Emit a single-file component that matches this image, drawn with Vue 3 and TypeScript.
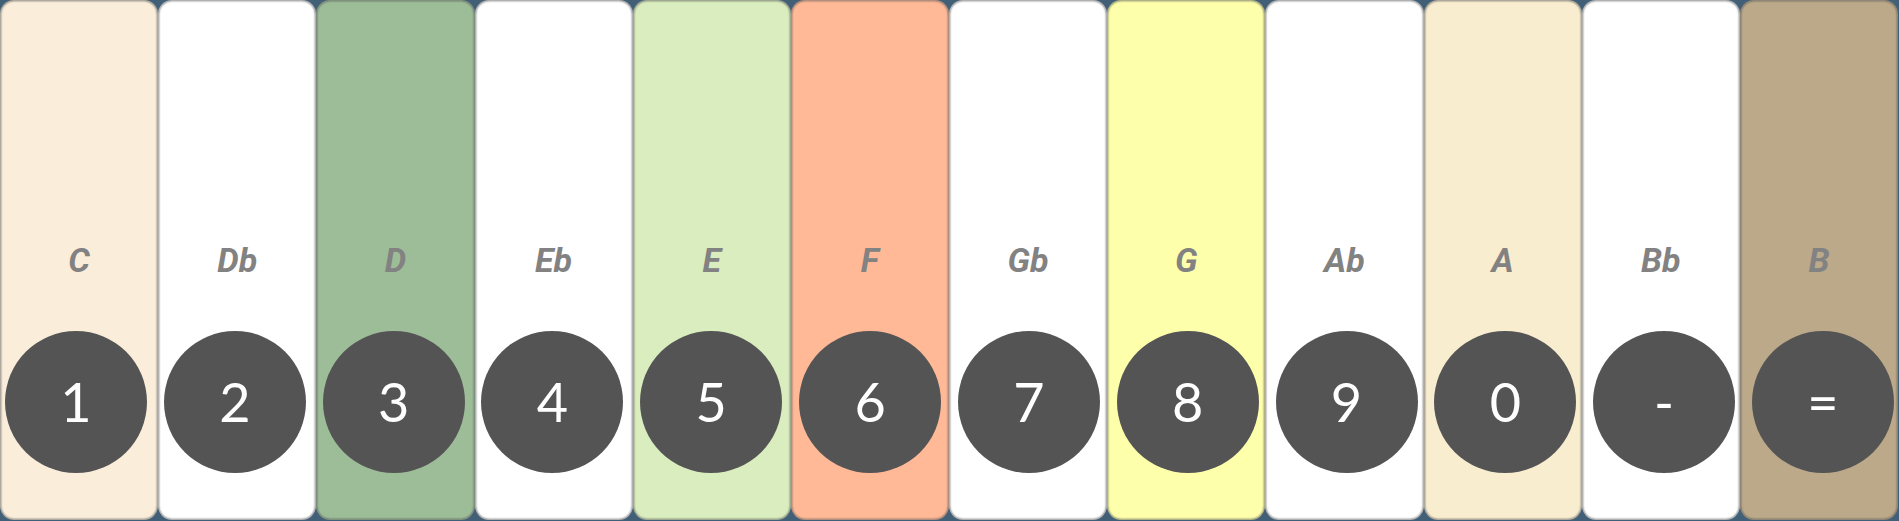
<script setup lang="ts">
interface PianoKey {
  note: string
  hotkey: string
  tone: string
}

const keys: PianoKey[] = [
  { note: 'C', hotkey: '1', tone: 'cream' },
  { note: 'Db', hotkey: '2', tone: 'white' },
  { note: 'D', hotkey: '3', tone: 'green' },
  { note: 'Eb', hotkey: '4', tone: 'white' },
  { note: 'E', hotkey: '5', tone: 'lime' },
  { note: 'F', hotkey: '6', tone: 'coral' },
  { note: 'Gb', hotkey: '7', tone: 'white' },
  { note: 'G', hotkey: '8', tone: 'yellow' },
  { note: 'Ab', hotkey: '9', tone: 'white' },
  { note: 'A', hotkey: '0', tone: 'sand' },
  { note: 'Bb', hotkey: '-', tone: 'white' },
  { note: 'B', hotkey: '=', tone: 'tan' },
]
</script>

<template>
  <main class="keyboard">
    <div class="keys">
      <button
        v-for="key in keys"
        :key="key.note"
        type="button"
        class="key"
        :class="key.tone"
        :aria-keyshortcuts="key.hotkey"
      >
        {{ key.note }}
      </button>
    </div>
    <div class="hotkeys">
      <kbd v-for="key in keys" :key="key.hotkey" class="hotkey">{{ key.hotkey }}</kbd>
    </div>
  </main>
</template>

<style>
body {
  margin: 0;
  background: #425f78;
}
</style>

<style scoped>
.keyboard {
  display: grid;
  min-height: 100vh;
}

.keys,
.hotkeys {
  grid-area: 1 / 1;
}

.keys {
  display: grid;
  grid-template-columns: repeat(12, 1fr);
  padding: 0 1px 1px 0;
}

.key {
  min-width: 0;
  margin: 0;
  padding: 0;
  border: 1px solid rgba(100, 100, 100, 0.5);
  border-radius: 14px;
  box-shadow: inset 0 0 2px rgba(60, 60, 60, 0.8);
  color: #828282;
  font-family: Roboto, "Liberation Sans", sans-serif;
  font-size: 34px;
  font-style: italic;
  font-weight: 700;
  line-height: 40px;
  cursor: pointer;
}

.cream { background-color: #faeedb; }
.white { background-color: #ffffff; }
.green { background-color: #9dbc98; }
.lime { background-color: #d9edbf; }
.coral { background-color: #ffb996; }
.yellow { background-color: #fdffab; }
.sand { background-color: #f9edd0; }
.tan { background-color: #bba98a; }

.hotkeys {
  display: flex;
  align-items: flex-end;
  justify-content: space-between;
  padding: 0 5px 48px;
  pointer-events: none;
}

.hotkey {
  display: flex;
  align-items: center;
  justify-content: center;
  flex: 0 1 142px;
  aspect-ratio: 1;
  border-radius: 50%;
  background: #545454;
  color: #ffffff;
  font-family: Lato, sans-serif;
  font-size: 54px;
  line-height: 64px;
}
</style>
